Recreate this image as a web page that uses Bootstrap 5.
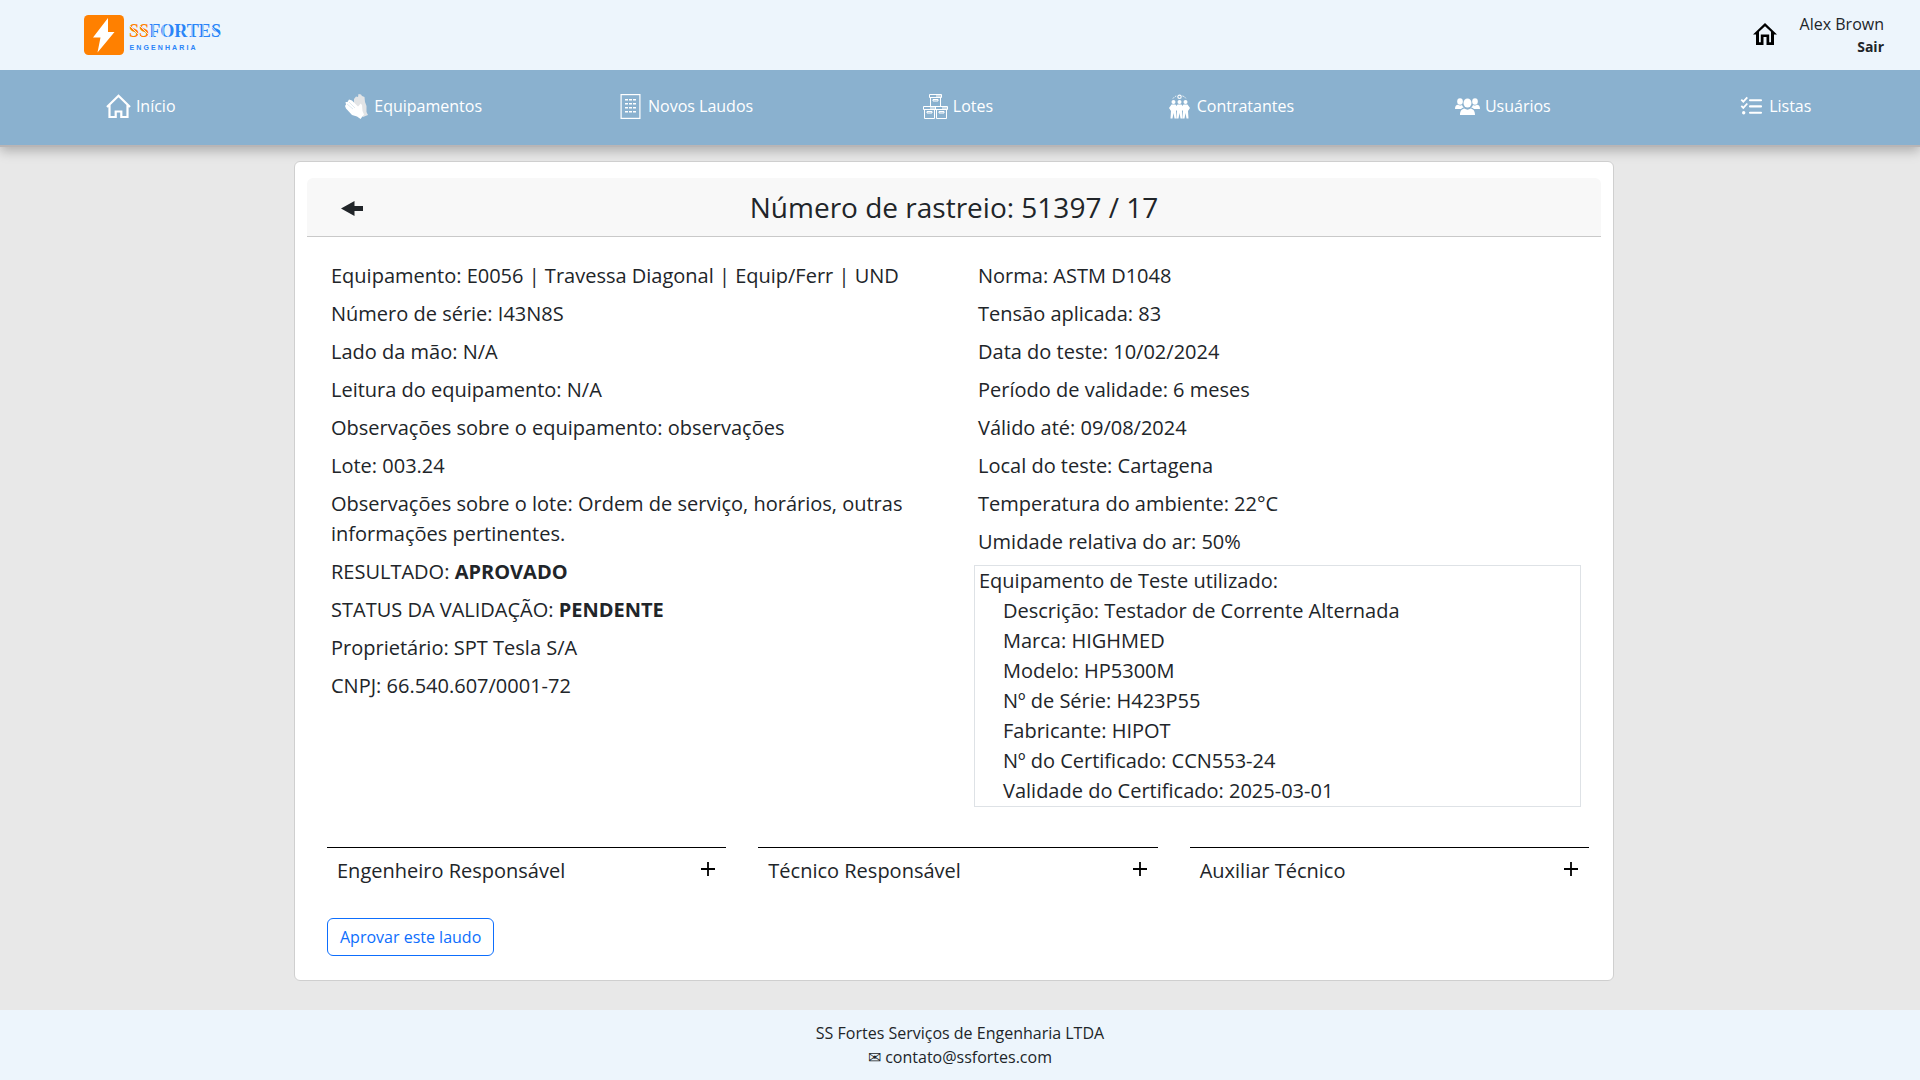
<!DOCTYPE html>
<html lang="pt-BR">
<head>
<meta charset="utf-8">
<meta name="viewport" content="width=device-width, initial-scale=1">
<title>SS Fortes Engenharia</title>
<link href="https://cdn.jsdelivr.net/npm/bootstrap@5.3.0/dist/css/bootstrap.min.css" rel="stylesheet">
<style>
  body { font-family: "Open Sans", "Noto Sans", sans-serif; background: #e8e8e8; min-height: 100vh; }
  .top-header { height: 70px; background: #edf5fc; padding: 0 36px 0 84px; }
  .home-link { margin: 0 23px 2px 0; }
  .user-box { line-height: 24px; padding-bottom: 2px; }
  .user-box .leave { font-size: 14px; line-height: 21px; }
  .main-menu { height: 77px; background: #8ab1cf; border-bottom: 2px solid #b8b5b6; box-shadow: 0 4px 11px rgba(0,0,0,.25); padding: 0 8.500px 2px 4.500px; clip-path: inset(0 0 -20px 0); }
  .main-menu .nav-link { color: #fff; padding: 0; gap: 5px; line-height: 24px; }
  .main-menu .nav-item { flex: 1 1 0; }
  .report { width: 1320px; margin: 14px 0 0 294px; border-color: #cfcfcf; padding: 16px 12px 24px; }
  .report-head { height: 59px; background: #f8f8f8; border-bottom: 1px solid #c9c9c9; }
  .report-title { font-size: 28px; line-height: 42px; font-weight: 400; }
  .back-link { left: 34px; top: 8px; }
  .fields { font-size: 20px; padding-top: 24px; }
  .fields .fcol { padding: 0 20px; }
  .fields p { margin: 0 0 8px; padding: 0 4px; }
  .tester { border: 1px solid #dee2e6; padding: 0 4px; }
  .tester-items { padding-left: 24px; }
  .people { gap: 32px; padding: 0 12px 0 20px; margin-top: 40px; font-size: 20px; }
  .person { border-top: 1px solid #000; padding: 8px 11px 0 10px; height: 71px; }
  .person svg { margin-top: 6px; }
  .approve { margin-left: 20px; }
  .site-footer { height: 70px; padding-top: 11px; background: #edf5fc; }
</style>
<script src="https://cdn.jsdelivr.net/npm/bootstrap@5.3.0/dist/js/bootstrap.bundle.min.js"></script>
</head>
<body class="d-flex flex-column">
<header class="top-header d-flex align-items-center justify-content-between flex-shrink-0">
  <a href="#" class="d-flex" aria-label="SS Fortes Engenharia">
    <svg width="140" height="40" viewBox="0 0 140 40">
      <rect width="40" height="40" rx="4.500" fill="#ff8000"/>
      <path d="M24 3 9 22.500h7.500L13.500 37.500 30.500 17h-6.500z" fill="#fff"/>
      <text x="45" y="22" font-family="Liberation Serif, serif" font-weight="700" font-size="19" fill="#2a84f8" textLength="92" lengthAdjust="spacingAndGlyphs"><tspan fill="#ff8000">SS</tspan>FORTES</text>
      <path d="M45 10 58 23M55 10 68 23M69 8.500V24M79 8.500V24M84 8.500V24M97 8.500V24M108 8.500V24M119 8.500V24M126 10 138 23" stroke="#edf5fc" stroke-width=".9" fill="none"/>
      <text x="45.500" y="35" font-family="Liberation Sans, sans-serif" font-size="7" font-weight="700" fill="#2a84f8" textLength="66">ENGENHARIA</text>
    </svg>
  </a>
  <div class="d-flex align-items-center">
    <a href="#" class="home-link d-flex" aria-label="Início"><svg width="24" height="22" viewBox="0 0 24 22"><path d="M0 11.500 12 0 24 11.500H21V22H13.500V14h-3v8H3V11.500zM6 8.800V19.300H7.800V11.500H16.200V19.300H18V8.800L12 3.200z" fill="#000" fill-rule="evenodd"/></svg></a>
    <div class="user-box text-end"><div>Alex Brown</div><div class="leave fw-bold">Sair</div></div>
  </div>
</header>
<nav class="main-menu d-flex align-items-center flex-shrink-0">
  <ul class="nav w-100 flex-nowrap">
    <li class="nav-item"><a class="nav-link d-flex justify-content-center" href="#"><svg width="25" height="25" viewBox="0 0 25 25"><path d="M1 13 12.500 1.800 24 13M3.500 11V23H9.700V17.500h5.600V23H21.500V11" fill="none" stroke="#fff" stroke-width="2.200"/></svg>Início</a></li>
    <li class="nav-item"><a class="nav-link d-flex justify-content-center" href="#"><svg width="25" height="25" viewBox="0 0 25 25"><path d="M10 5 12 2.500 14 3 14.500 0 17 .5 18 2 20.500 3 21 8 22.500 12V18L24 21 19 23 10 11z" fill="#e2e4e6"/><path d="M1 12 2 10.500 1.500 8 3.500 8 5 5.500 8 6.500 14 12.500 15.500 11 16.500 9.500 18 11 18.500 17 20 20.500 16.500 25 13 22.500 8 21 2 14.500z" fill="#fff"/><path d="M3 10 9 15M5 8 11 14" stroke="#c9dbe8" stroke-width=".6"/></svg>Equipamentos</a></li>
    <li class="nav-item"><a class="nav-link d-flex justify-content-center" href="#"><svg width="25" height="25" viewBox="0 0 25 25"><rect x="3.100" y=".6" width="18.800" height="23.800" fill="none" stroke="#fff" stroke-width="1.200"/><path d="M7 5.700h11M7 9.700h11M7 13.700h11M7 17.700h11" stroke="#fff" stroke-width="1.400" stroke-dasharray="3 1"/></svg>Novos Laudos</a></li>
    <li class="nav-item"><a class="nav-link d-flex justify-content-center" href="#"><svg width="25" height="25" viewBox="0 0 25 25"><g fill="none" stroke="#fff" stroke-width="1"><path d="M6.500.5h12v3h-12zM7.500 3.500v9M17.500 3.500v9M10 5.500v1.500h5V5.500zM.5 12.500h24v3H.5zM12.500 12.500v3M1.500 15.500v9h10v-9M13.500 15.500v9h10v-9M4 17.500V19h5v-1.500zM16 17.500V19h5v-1.500z"/></g><path d="M13 1h5v2h-5zM7 13h5v2H7zM19 13h5v2h-5z" fill="#c5d8e6"/></svg>Lotes</a></li>
    <li class="nav-item"><a class="nav-link d-flex justify-content-center" href="#"><svg width="25" height="25" viewBox="0 0 25 25"><g fill="#fff"><circle cx="6.500" cy="8" r="2"/><circle cx="12.500" cy="8" r="2"/><circle cx="18.500" cy="8" r="2"/><path id="pessoa" d="M4.500 10.500h4l2.500 3.500-2 3L9.500 24.500H7.500L6.500 19l-1 5.500H3.500L4 17l-2-3z"/><use href="#pessoa" x="6"/><use href="#pessoa" x="12"/></g><circle cx="12.500" cy="2.800" r="1.700" fill="none" stroke="#fff" stroke-width="1.100"/><path d="M6 4.500Q7.500 2.500 9.500 2M15.500 2q2 .5 3.500 2.500" fill="none" stroke="#fff" stroke-dasharray="1.500 1"/></svg>Contratantes</a></li>
    <li class="nav-item"><a class="nav-link d-flex justify-content-center" href="#"><svg width="25" height="25" viewBox="0 0 25 25"><g fill="#fff"><ellipse cx="12.500" cy="9" rx="4" ry="4.600"/><ellipse cx="5" cy="7.500" rx="2.800" ry="3.300"/><ellipse cx="20" cy="7.500" rx="2.800" ry="3.300"/><path d="M5 21c0-4.500 1.800-5.800 4.300-6.500 2 1.500 4.400 1.500 6.400 0C18.200 15.200 20 16.500 20 21zM0 15c0-3 1.200-4 3-4.200 1.300.8 2.500.8 4 .1q.6 1.800 1.800 2.700Q7 14 6 15zM25 15c0-3-1.200-4-3-4.200-1.300.8-2.500.8-4 .1q-.6 1.800-1.800 2.700 1.800.4 2.800 1.400z"/></g></svg>Usuários</a></li>
    <li class="nav-item"><a class="nav-link d-flex justify-content-center" href="#"><svg width="25" height="25" viewBox="0 0 25 25"><g fill="none" stroke="#fff"><path d="M2.300 5.700 4.300 7.700 8.300 3.300M2.300 11.900 4.300 13.900 8.300 9.500" stroke-width="1.800"/><path d="M11 6.200H22M11 12.400H22M11 18.700H22" stroke-width="2.100" stroke-linecap="round"/></g><circle cx="4.700" cy="18.700" r="1.700" fill="#fff"/></svg>Listas</a></li>
  </ul>
</nav>
<main class="flex-grow-1">
  <div class="card report">
    <div class="report-head position-relative rounded-top text-center pt-2">
      <a href="#" class="back-link position-absolute" aria-label="Voltar"><svg width="22" height="42" viewBox="0 0 22 42"><path d="M0 22.500 13.500 15v5H22v5H13.500v5z" fill="#212529"/></svg></a>
      <h1 class="report-title m-0">Número de rastreio: 51397 / 17</h1>
    </div>
    <div class="row g-0 fields">
      <div class="col-6 fcol">
        <p>Equipamento: E0056 | Travessa Diagonal | Equip/Ferr | UND</p>
        <p>Número de série: I43N8S</p>
        <p>Lado da mão: N/A</p>
        <p>Leitura do equipamento: N/A</p>
        <p>Observações sobre o equipamento: observações</p>
        <p>Lote: 003.24</p>
        <p>Observações sobre o lote: Ordem de serviço, horários, outras informações pertinentes.</p>
        <p>RESULTADO: <strong>APROVADO</strong></p>
        <p>STATUS DA VALIDAÇÃO: <strong>PENDENTE</strong></p>
        <p>Proprietário: SPT Tesla S/A</p>
        <p>CNPJ: 66.540.607/0001-72</p>
      </div>
      <div class="col-6 fcol">
        <p>Norma: ASTM D1048</p>
        <p>Tensão aplicada: 83</p>
        <p>Data do teste: 10/02/2024</p>
        <p>Período de validade: 6 meses</p>
        <p>Válido até: 09/08/2024</p>
        <p>Local do teste: Cartagena</p>
        <p>Temperatura do ambiente: 22°C</p>
        <p>Umidade relativa do ar: 50%</p>
        <div class="tester">
          Equipamento de Teste utilizado:
          <div class="tester-items">
            <div>Descrição: Testador de Corrente Alternada</div>
            <div>Marca: HIGHMED</div>
            <div>Modelo: HP5300M</div>
            <div>Nº de Série: H423P55</div>
            <div>Fabricante: HIPOT</div>
            <div>Nº do Certificado: CCN553-24</div>
            <div>Validade do Certificado: 2025-03-01</div>
          </div>
        </div>
      </div>
    </div>
    <div class="people d-flex">
      <div class="person flex-fill w-100 d-flex justify-content-between align-items-start"><span>Engenheiro Responsável</span><svg width="14" height="14" viewBox="0 0 14 14"><path d="M7 0v14M0 7h14" stroke="#000" stroke-width="1.800"/></svg></div>
      <div class="person flex-fill w-100 d-flex justify-content-between align-items-start"><span>Técnico Responsável</span><svg width="14" height="14" viewBox="0 0 14 14"><path d="M7 0v14M0 7h14" stroke="#000" stroke-width="1.800"/></svg></div>
      <div class="person flex-fill w-100 d-flex justify-content-between align-items-start"><span>Auxiliar Técnico</span><svg width="14" height="14" viewBox="0 0 14 14"><path d="M7 0v14M0 7h14" stroke="#000" stroke-width="1.800"/></svg></div>
    </div>
    <div><button type="button" class="btn btn-outline-primary approve">Aprovar este laudo</button></div>
  </div>
</main>
<footer class="site-footer text-center flex-shrink-0">
  <div>SS Fortes Serviços de Engenharia LTDA</div>
  <div>✉ contato@ssfortes.com</div>
</footer>
</body>
</html>
